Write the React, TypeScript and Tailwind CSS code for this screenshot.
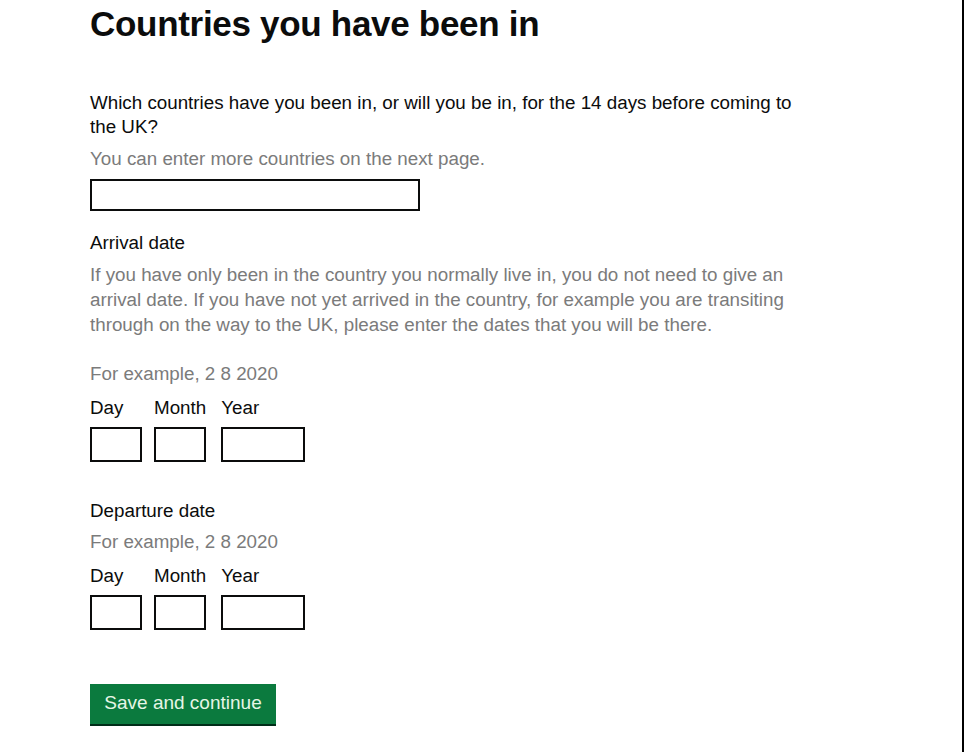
const DateFields = () => {
    return (
        <div className="flex items-end">
            <div className="flex flex-col">
                <span className="leading-[24px]">Day</span>
                <div className="mt-[7px] w-[52px] h-[35px] border-2 border-[#0b0c0c]"></div>
            </div>
            <div className="flex flex-col ml-[12px]">
                <span className="leading-[24px]">Month</span>
                <div className="mt-[7px] w-[52px] h-[35px] border-2 border-[#0b0c0c]"></div>
            </div>
            <div className="flex flex-col ml-[15px]">
                <span className="leading-[24px]">Year</span>
                <div className="mt-[7px] w-[84px] h-[35px] border-2 border-[#0b0c0c]"></div>
            </div>
        </div>
    );
};

const App = () => {
    return (
        <div
            className="w-[964px] h-[752px] bg-white border-r-2 border-black text-[#0b0c0c] text-[18.8px] overflow-hidden"
            style={{ fontFamily: '"Liberation Sans", Arial, sans-serif' }}
        >
            <div className="pl-[90px] pt-[4px]">
                {/* Heading */}
                <h1 className="text-[35px] leading-[40px] font-bold tracking-[-0.3px]">Countries you have been in</h1>

                {/* Countries question */}
                <p className="mt-[47px] leading-[24px] w-[720px]">
                    Which countries have you been in, or will you be in, for the 14 days before coming to the UK?
                </p>
                <p className="mt-[8px] leading-[24px] text-[#7b7b7b]">You can enter more countries on the next page.</p>
                <div className="mt-[8px] w-[330px] h-[32px] border-2 border-[#0b0c0c]"></div>

                {/* Arrival */}
                <p className="mt-[20px] leading-[24px]">Arrival date</p>
                <p className="mt-[7px] leading-[25px] text-[#7b7b7b] w-[720px]">
                    If you have only been in the country you normally live in, you do not need to give an arrival date. If you have not yet arrived in the country, for example you are transiting through on the way to the UK, please enter the dates that you will be there.
                </p>
                <p className="mt-[24px] leading-[25px] text-[#7b7b7b]">For example, 2 8 2020</p>
                <div className="mt-[10px]">
                    <DateFields />
                </div>

                {/* Departure */}
                <p className="mt-[37px] leading-[24px]">Departure date</p>
                <p className="mt-[7px] leading-[24px] text-[#7b7b7b]">For example, 2 8 2020</p>
                <div className="mt-[10px]">
                    <DateFields />
                </div>

                <button className="mt-[54px] w-[186px] h-[40px] bg-[#0b7a3e] text-[#e6f6e6] text-[19px] shadow-[0_2px_0_#002d18] pb-[2px]">
                    Save and continue
                </button>
            </div>
        </div>
    );
};

export default App;
